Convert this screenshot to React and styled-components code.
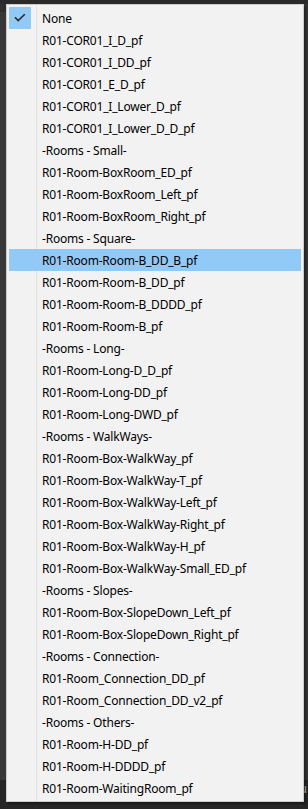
import React from "react";
import styled, { createGlobalStyle } from "styled-components";

const items = [
  "None",
  "R01-COR01_I_D_pf",
  "R01-COR01_I_DD_pf",
  "R01-COR01_E_D_pf",
  "R01-COR01_I_Lower_D_pf",
  "R01-COR01_I_Lower_D_D_pf",
  "-Rooms - Small-",
  "R01-Room-BoxRoom_ED_pf",
  "R01-Room-BoxRoom_Left_pf",
  "R01-Room-BoxRoom_Right_pf",
  "-Rooms - Square-",
  "R01-Room-Room-B_DD_B_pf",
  "R01-Room-Room-B_DD_pf",
  "R01-Room-Room-B_DDDD_pf",
  "R01-Room-Room-B_pf",
  "-Rooms - Long-",
  "R01-Room-Long-D_D_pf",
  "R01-Room-Long-DD_pf",
  "R01-Room-Long-DWD_pf",
  "-Rooms - WalkWays-",
  "R01-Room-Box-WalkWay_pf",
  "R01-Room-Box-WalkWay-T_pf",
  "R01-Room-Box-WalkWay-Left_pf",
  "R01-Room-Box-WalkWay-Right_pf",
  "R01-Room-Box-WalkWay-H_pf",
  "R01-Room-Box-WalkWay-Small_ED_pf",
  "-Rooms - Slopes-",
  "R01-Room-Box-SlopeDown_Left_pf",
  "R01-Room-Box-SlopeDown_Right_pf",
  "-Rooms - Connection-",
  "R01-Room_Connection_DD_pf",
  "R01-Room_Connection_DD_v2_pf",
  "-Rooms - Others-",
  "R01-Room-H-DD_pf",
  "R01-Room-H-DDDD_pf",
  "R01-Room-WaitingRoom_pf",
];

const selected = "None";
const hovered = "R01-Room-Room-B_DD_B_pf";

const GlobalStyle = createGlobalStyle`
  html, body {
    margin: 0;
    padding: 0;
    background: #333333;
  }
  body {
    font-family: "Noto Sans", "Open Sans", sans-serif;
  }
`;

const Editor = styled.div`
  position: relative;
  width: 308px;
  height: 809px;
  overflow: hidden;
  display: grid;
  grid-template-rows: 4px 1fr 29px;
  background: #343434;
`;

const TopBar = styled.div`
  background: #2a2a2a;
`;

const Body = styled.div`
  display: grid;
  grid-template-columns: 6px 1fr 7px;
`;

const LeftStrip = styled.div`
  background: #383838;
  border-top: 8px solid #2e2e2e;
`;

const RightStrip = styled.div`
  grid-column: 3;
  background: #363636;
  border-left: 2px solid #2a2a2a;
`;

const StatusBar = styled.div`
  background: #262626;
  display: flex;
  justify-content: flex-end;
  align-items: flex-start;
  color: #c8c8c8;
  font-size: 12px;
  line-height: 14px;
`;

const StatusText = styled.span`
  margin-top: 2px;
  margin-right: 1px;
`;

const Menu = styled.div`
  position: absolute;
  top: 4px;
  left: 6px;
  width: 292px;
  padding: 2px;
  background: #f2f2f2;
  border: 1px solid #cccccc;
  box-shadow: 2px 2px 2px rgba(0, 0, 0, 0.35);
  display: flex;
  flex-direction: column;
`;

const Gutter = styled.div`
  position: absolute;
  top: 0;
  bottom: 0;
  left: 29px;
  width: 1px;
  background: #e3e3e3;
`;

const Row = styled.div`
  position: relative;
  display: flex;
  align-items: center;
  height: 22px;
  background: ${(p) => (p.$hover ? "#91c9f7" : "transparent")};
  color: #000000;
  font-size: 12px;
`;

const CheckBox = styled.div`
  width: 22px;
  height: 22px;
  flex: none;
  display: flex;
  align-items: center;
  justify-content: center;
  background: ${(p) => (p.$on ? "#91c9f7" : "transparent")};
`;

const Label = styled.span`
  margin-left: 11px;
  white-space: nowrap;
  letter-spacing: -0.2px;
`;

const Check = () => (
  <svg width="12" height="10" viewBox="0 0 12 10">
    <path d="M1 4.2 L4.2 7.6 L10.8 1.2" fill="none" stroke="#2b2b2b" strokeWidth="1.6" />
  </svg>
);

export default function App() {
  return (
    <>
      <GlobalStyle />
      <Editor>
        <TopBar />
        <Body>
          <LeftStrip />
          <RightStrip />
        </Body>
        <StatusBar>
          <StatusText>u</StatusText>
        </StatusBar>
        <Menu>
          <Gutter />
          {items.map((name) => (
            <Row key={name} $hover={name === hovered}>
              <CheckBox $on={name === selected}>{name === selected && <Check />}</CheckBox>
              <Label>{name}</Label>
            </Row>
          ))}
        </Menu>
      </Editor>
    </>
  );
}
